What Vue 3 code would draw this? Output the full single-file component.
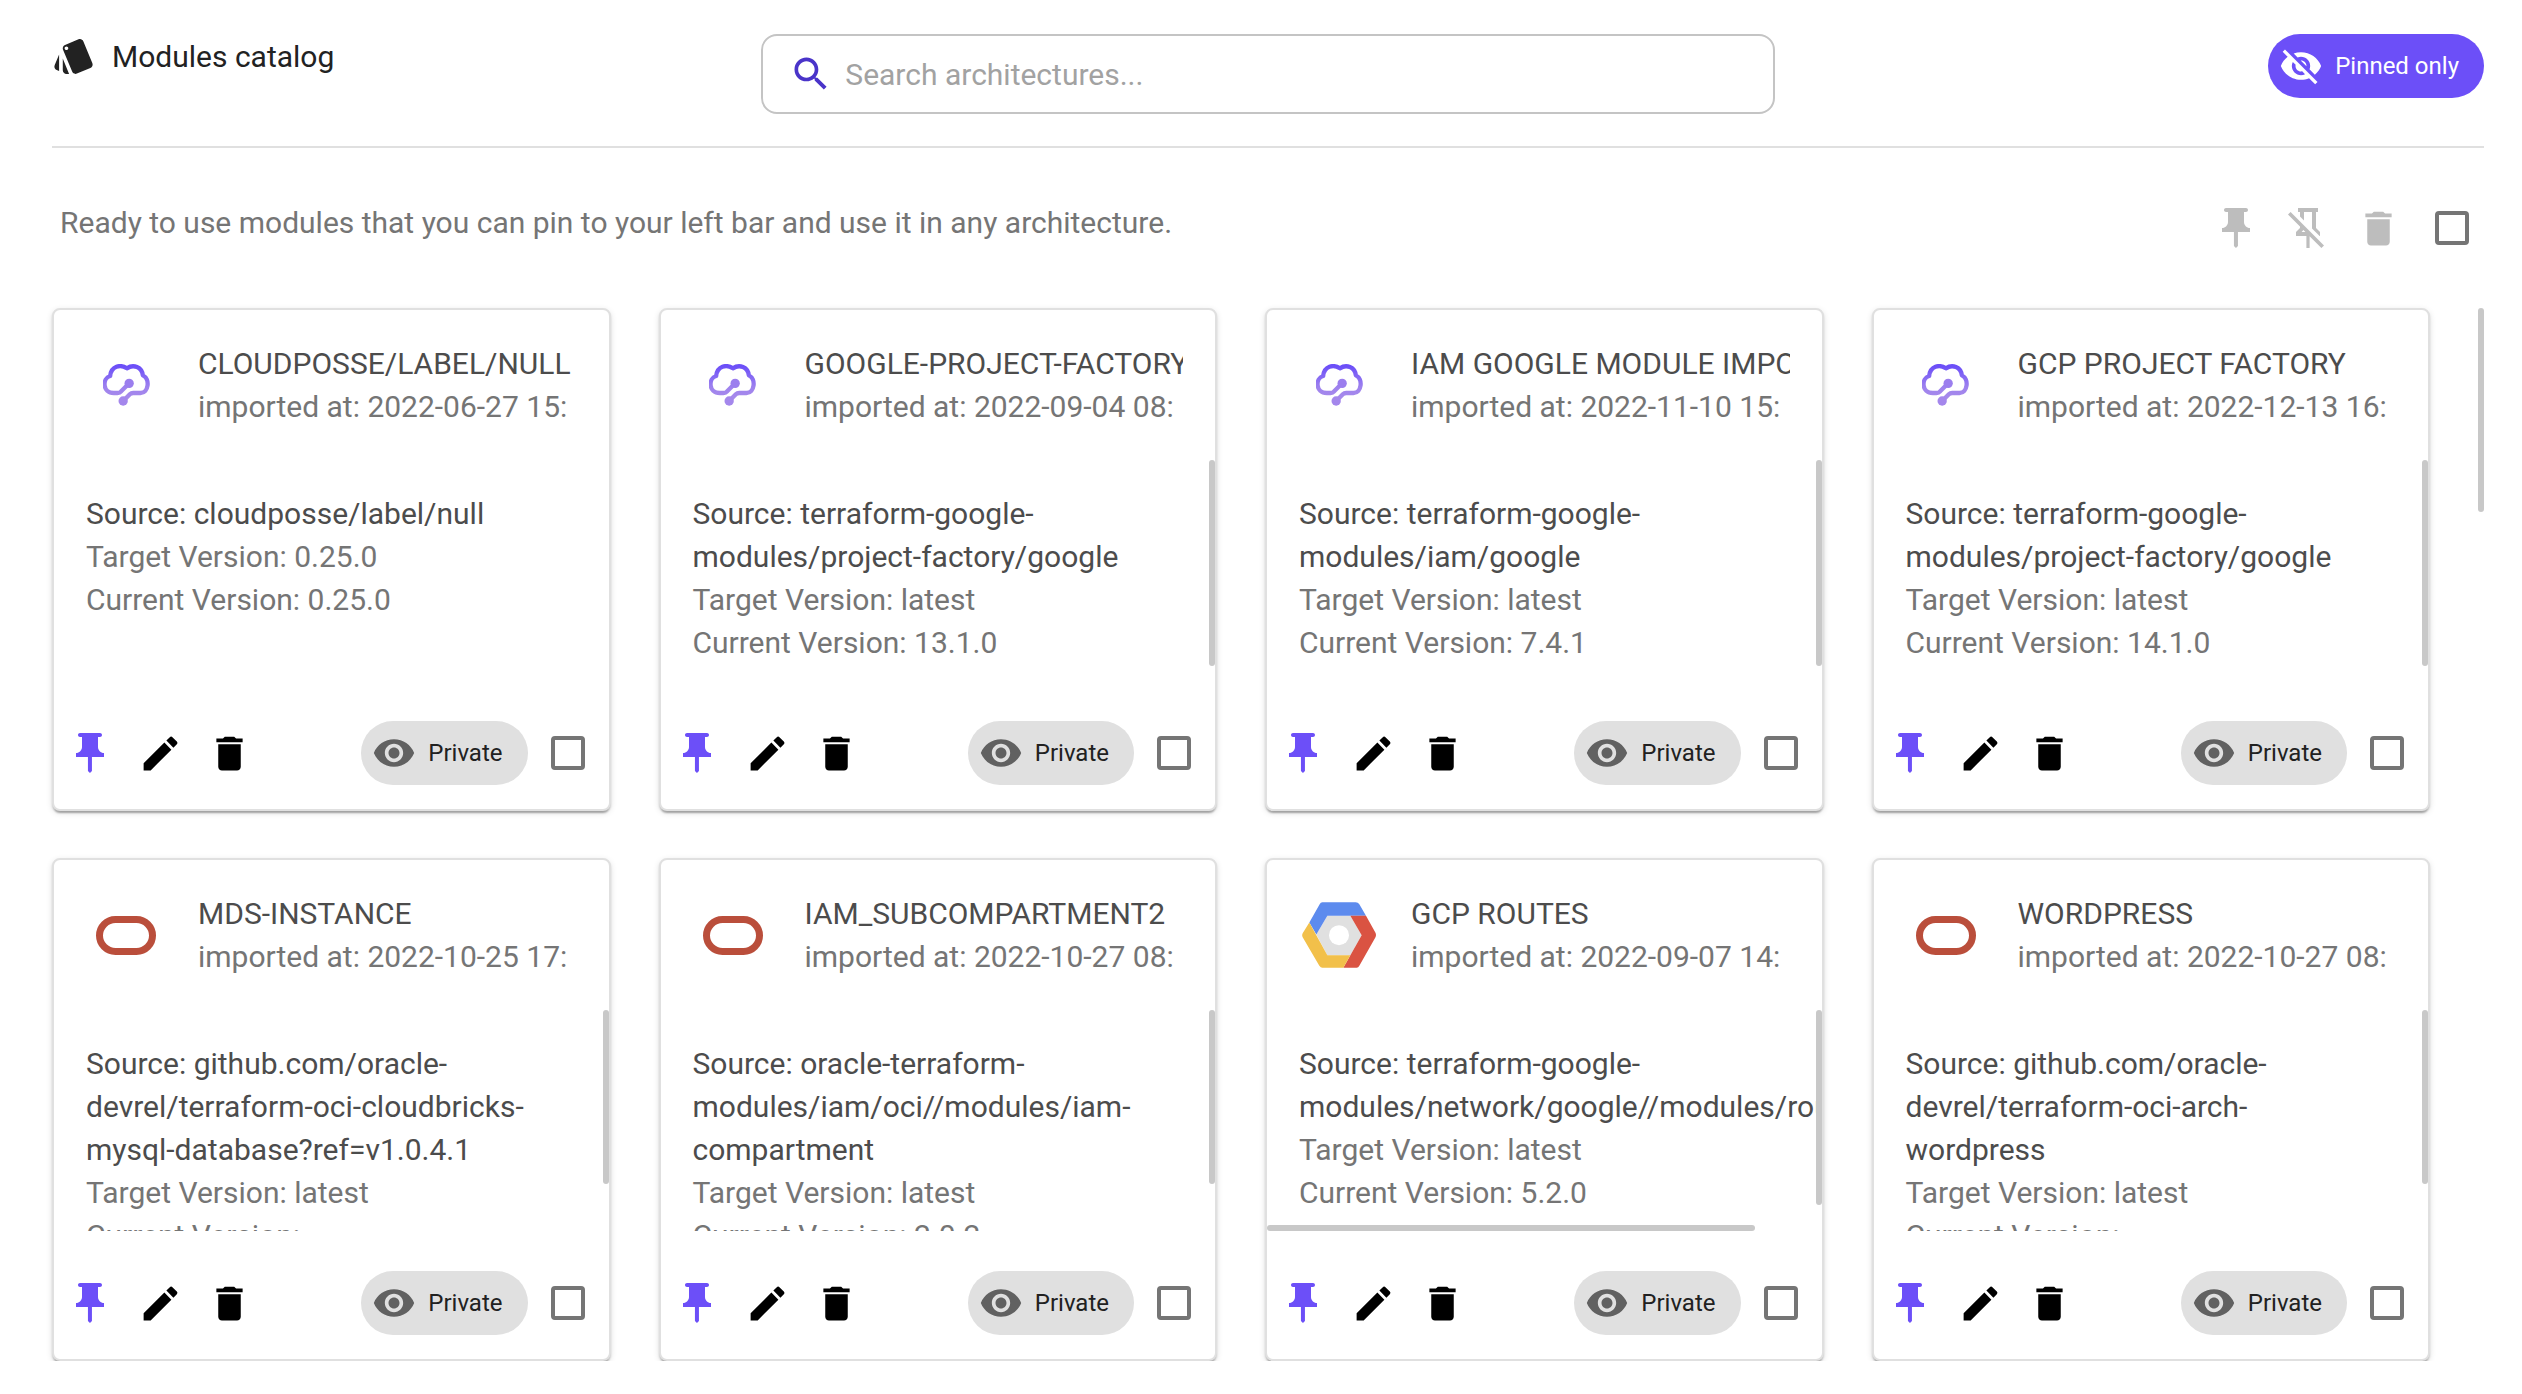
<script setup>
import { h, ref } from 'vue'

const paths = {
  style: 'M2.53 19.65l1.34.56v-9.03l-2.43 5.86c-.41 1.02.08 2.19 1.09 2.61zm19.5-3.7L17.07 3.98c-.31-.75-1.04-1.21-1.81-1.23-.26 0-.53.04-.79.15L7.1 5.95c-.75.31-1.21 1.03-1.23 1.8-.01.27.04.54.15.8l4.96 11.97c.31.76 1.05 1.22 1.83 1.23.26 0 .52-.05.77-.15l7.36-3.05c1.02-.42 1.51-1.59 1.09-2.6zM7.88 8.75c-.55 0-1-.45-1-1s.45-1 1-1 1 .45 1 1-.45 1-1 1zm-2 11c0 1.1.9 2 2 2h1.45l-3.45-8.34v6.34z',
  search: 'M15.5 14h-.79l-.28-.27C15.41 12.59 16 11.11 16 9.5 16 5.91 13.09 3 9.5 3S3 5.91 3 9.5 5.91 16 9.5 16c1.61 0 3.09-.59 4.23-1.57l.27.28v.79l5 4.99L20.49 19l-4.99-5zm-6 0C7.01 14 5 11.99 5 9.5S7.01 5 9.5 5 14 7.01 14 9.5 11.99 14 9.5 14z',
  eye: 'M12 4.5C7 4.5 2.73 7.61 1 12c1.73 4.39 6 7.5 11 7.5s9.27-3.11 11-7.5c-1.73-4.39-6-7.5-11-7.5zM12 17c-2.76 0-5-2.24-5-5s2.24-5 5-5 5 2.24 5 5-2.24 5-5 5zm0-8c-1.66 0-3 1.34-3 3s1.34 3 3 3 3-1.34 3-3-1.34-3-3-3z',
  eyeOff: 'M12 7c2.76 0 5 2.24 5 5 0 .65-.13 1.26-.36 1.83l2.92 2.92c1.51-1.26 2.7-2.89 3.43-4.75-1.73-4.39-6-7.5-11-7.5-1.4 0-2.74.25-3.98.7l2.16 2.16C10.74 7.13 11.35 7 12 7zM2 4.27l2.28 2.28.46.46C3.08 8.3 1.78 10.02 1 12c1.73 4.39 6 7.5 11 7.5 1.55 0 3.03-.3 4.38-.84l.42.42L19.73 22 21 20.73 3.27 3 2 4.27zM7.53 9.8l1.55 1.55c-.05.21-.08.43-.08.65 0 1.66 1.34 3 3 3 .22 0 .44-.03.65-.08l1.55 1.55c-.67.33-1.41.53-2.2.53-2.76 0-5-2.24-5-5 0-.79.2-1.53.53-2.2zm4.31-.78l3.15 3.15.02-.16c0-1.66-1.34-3-3-3l-.17.01z',
  pin: 'M16 9V4h1c.55 0 1-.45 1-1s-.45-1-1-1H7c-.55 0-1 .45-1 1s.45 1 1 1h1v5c0 1.66-1.34 3-3 3v2h5.97v7l1 1 1-1v-7H19v-2c-1.66 0-3-1.34-3-3z',
  pinOff: 'M8,6.2V4H7V2H17V4H16V12L18,14V16H17.8L14,12.2V4H10V8.2L8,6.2M20,20.7L18.7,22L12.8,16.1V22H11.2V16H6V14L8,12V11.3L2,5.3L3.3,4L20,20.7M8.8,14H10.7L9.7,13L8.8,14Z',
  trash: 'M6 19c0 1.1.9 2 2 2h8c1.1 0 2-.9 2-2V7H6v12zM19 4h-3.5l-1-1h-5l-1 1H5v2h14V4z',
  edit: 'M3 17.25V21h3.75L17.81 9.94l-3.75-3.75L3 17.25zM20.71 7.04c.39-.39.39-1.02 0-1.41l-2.34-2.34c-.39-.39-1.02-.39-1.41 0l-1.83 1.83 3.75 3.75 1.83-1.83z',
}

const Icon = (props) =>
  h('svg', { viewBox: '0 0 24 24', fill: 'currentColor', 'aria-hidden': 'true' }, [
    h('path', { d: paths[props.name] }),
  ])
Icon.props = ['name']

const query = ref('')

// barY: vertical thumb height in pixels, barX: horizontal thumb width in percent
const modules = [
  { name: 'CLOUDPOSSE/LABEL/NULL', date: '2022-06-27 15:', source: 'cloudposse/label/null', target: '0.25.0', current: '0.25.0', logo: 'cloud' },
  { name: 'GOOGLE-PROJECT-FACTORY', date: '2022-09-04 08:', source: 'terraform-google-modules/project-factory/google', target: 'latest', current: '13.1.0', logo: 'cloud', barY: 206 },
  { name: 'IAM GOOGLE MODULE IMPORT', date: '2022-11-10 15:', source: 'terraform-google-modules/iam/google', target: 'latest', current: '7.4.1', logo: 'cloud', barY: 206 },
  { name: 'GCP PROJECT FACTORY', date: '2022-12-13 16:', source: 'terraform-google-modules/project-factory/google', target: 'latest', current: '14.1.0', logo: 'cloud', barY: 206 },
  { name: 'MDS-INSTANCE', date: '2022-10-25 17:', source: 'github.com/oracle-devrel/terraform-oci-cloudbricks-mysql-database?ref=v1.0.4.1', target: 'latest', current: '', logo: 'oracle', barY: 174 },
  { name: 'IAM_SUBCOMPARTMENT2', date: '2022-10-27 08:', source: 'oracle-terraform-modules/iam/oci//modules/iam-compartment', target: 'latest', current: '2.0.2', logo: 'oracle', barY: 174 },
  { name: 'GCP ROUTES', date: '2022-09-07 14:', source: 'terraform-google-modules/network/google//modules/routes', target: 'latest', current: '5.2.0', logo: 'google', barY: 195, barX: 88 },
  { name: 'WORDPRESS', date: '2022-10-27 08:', source: 'github.com/oracle-devrel/terraform-oci-arch-wordpress', target: 'latest', current: '', logo: 'oracle', barY: 174 },
]
</script>

<template>
  <div class="page">
    <header class="top">
      <h1 class="title"><Icon name="style" class="icon-sm" />Modules catalog</h1>
      <label class="search">
        <Icon name="search" class="icon-sm search-icon" />
        <input v-model="query" type="text" placeholder="Search architectures..." aria-label="Search architectures" />
      </label>
      <button class="chip chip-primary" type="button"><Icon name="eyeOff" class="icon-sm" />Pinned only</button>
    </header>

    <div class="toolbar">
      <p class="intro">Ready to use modules that you can pin to your left bar and use it in any architecture.</p>
      <div class="bulk">
        <button class="act" type="button" aria-label="Pin selected" disabled><Icon name="pin" class="icon-lg" /></button>
        <button class="act" type="button" aria-label="Unpin selected" disabled><Icon name="pinOff" class="icon-lg" /></button>
        <button class="act" type="button" aria-label="Delete selected" disabled><Icon name="trash" class="icon-md" /></button>
        <input class="check" type="checkbox" aria-label="Select all modules" />
      </div>
    </div>

    <main class="content">
      <div class="cards">
        <article v-for="m in modules" :key="m.name" class="card">
          <div class="card-head">
            <div class="logo">
              <svg v-if="m.logo === 'cloud'" class="logo-cloud" viewBox="128 73 140 126" fill="none" aria-hidden="true">
                <g stroke="url(#cloud-fill)" stroke-width="13" stroke-linejoin="round">
                  <path d="M206 131L182 155Q178 160 171 160H160C125 160 125 116 149 109C152 79 180 73 199 86C219 73 244 82 247 107C270 118 264 160 240 160H218Q212 160 208 164L188 184" />
                </g>
                <circle cx="206" cy="131" r="14" fill="#9b7eee" />
                <circle cx="188" cy="184" r="14" fill="#a487ec" />
              </svg>
              <svg v-else-if="m.logo === 'oracle'" class="logo-oracle" viewBox="0 0 60 39" fill="none" aria-hidden="true">
                <rect x="3.5" y="3.5" width="53" height="32" rx="16" stroke="#ba4e3b" stroke-width="7" />
              </svg>
              <svg v-else class="logo-google" viewBox="96 66 222 197" aria-hidden="true">
                <path fill="#e0e0e0" d="M172 107H241L275 165L241 225H172L139 163Z" />
                <circle cx="207" cy="165" r="30" fill="#fff" />
                <path fill="#5d8bee" d="M157 66H257Q264 66 268 72L288 107H172L139 163L118 127L149 72Q152 66 157 66Z" />
                <path fill="#da5342" d="M241 107H288L316 157Q320 165 316 172L268 257Q265 263 260 263H220L275 165Z" />
                <path fill="#f2c04a" d="M118 127L172 225H241L220 263H157Q152 263 148 257L98 171Q95 165 98 159Z" />
              </svg>
            </div>
            <div class="heading">
              <h2>{{ m.name }}</h2>
              <p>imported at: {{ m.date }}</p>
            </div>
          </div>
          <div class="card-body">
            <div class="scroller">
              <p class="source">Source: {{ m.source }}</p>
              <p>Target Version: {{ m.target }}</p>
              <p>Current Version: {{ m.current }}</p>
            </div>
            <span v-if="m.barY" class="bar bar-y" :style="{ height: m.barY + 'px' }"></span>
            <span v-if="m.barX" class="bar bar-x" :style="{ width: m.barX + '%' }"></span>
          </div>
          <div class="card-foot">
            <button class="act act-pin" type="button" aria-label="Unpin module"><Icon name="pin" class="icon-lg" /></button>
            <button class="act" type="button" aria-label="Edit module"><Icon name="edit" class="icon-md" /></button>
            <button class="act" type="button" aria-label="Delete module"><Icon name="trash" class="icon-md" /></button>
            <button class="chip chip-end" type="button"><Icon name="eye" class="icon-sm" />Private</button>
            <input class="check" type="checkbox" :aria-label="'Select ' + m.name" />
          </div>
        </article>
      </div>
      <div class="thumb"></div>
    </main>

    <svg class="defs" width="0" height="0" aria-hidden="true">
      <defs>
        <linearGradient id="cloud-fill" x1="0" y1="0" x2="0" y2="1">
          <stop offset="0" stop-color="#6c4ff8" />
          <stop offset="0.6" stop-color="#9e82ee" />
          <stop offset="1" stop-color="#a98cea" />
        </linearGradient>
      </defs>
    </svg>
  </div>
</template>

<style>
body {
  background: #fff;
}
</style>

<style scoped>
.page {
  padding: 34px 38px 0 52px;
  font-family: Roboto, sans-serif;
  font-size: 30px;
  line-height: 43px;
  color: #757575;
}
h1,
h2,
p {
  margin: 0;
  font-size: inherit;
  font-weight: 400;
}
button,
input {
  font: inherit;
  margin: 0;
}
svg {
  display: block;
  flex: none;
}
.icon-sm {
  width: 44px;
  height: 44px;
}
.icon-md {
  width: 45px;
  height: 45px;
}
.icon-lg {
  width: 48px;
  height: 48px;
}
.top {
  display: grid;
  grid-template-columns: 7fr 10fr 7fr;
  align-items: start;
  padding-bottom: 32px;
  border-bottom: 2px solid #e0e0e0;
}
.title {
  display: flex;
  align-items: center;
  gap: 16px;
  color: #222;
}
.search {
  display: flex;
  align-items: center;
  gap: 12px;
  box-sizing: border-box;
  height: 80px;
  padding: 0 26px;
  border: 2px solid #c4c4c4;
  border-radius: 16px;
}
.search-icon {
  color: #4a34c9;
}
.search input {
  flex: 1;
  min-width: 0;
  padding: 0;
  border: 0;
  outline: 0;
  background: none;
  color: #222;
}
.search input::placeholder {
  color: #a2a2a2;
  opacity: 1;
}
.chip {
  display: flex;
  align-items: center;
  gap: 12px;
  height: 64px;
  padding: 0 25px 0 11px;
  border: 0;
  border-radius: 32px;
  background: #e0e0e0;
  color: #212121;
  font-size: 24px;
  white-space: nowrap;
}
.chip svg {
  color: #616161;
}
.chip-primary {
  justify-self: end;
  background: #6c4ff8;
  color: #fff;
}
.chip-primary svg {
  color: inherit;
}
.chip-end {
  margin-left: auto;
}
.toolbar {
  display: flex;
  justify-content: space-between;
  align-items: start;
  padding: 44px 0;
}
.intro {
  padding: 9px 8px 0;
}
.bulk {
  display: flex;
  align-items: center;
  padding-right: 15px;
  color: #bdbdbd;
}
.act {
  display: flex;
  padding: 12px;
  border: 0;
  background: none;
  color: #000;
}
.bulk .act {
  color: inherit;
}
.act-pin {
  color: #6c4ff8;
}
.bulk .check {
  margin-left: 22px;
}
.check {
  appearance: none;
  box-sizing: border-box;
  flex: none;
  width: 34px;
  height: 34px;
  border: 4px solid #757575;
  border-radius: 4px;
  background: none;
}
.content {
  display: flex;
  gap: 48px;
}
.cards {
  flex: 1;
  min-width: 0;
  display: grid;
  grid-template-columns: repeat(4, minmax(0, 1fr));
  gap: 47px 48px;
}
.thumb {
  width: 6px;
  height: 204px;
  border-radius: 3px;
  background: #c8c8c8;
}
.card {
  border: 2px solid #e0e0e0;
  border-radius: 8px;
  background: #fff;
  box-shadow: 0 4px 2px -2px rgba(0, 0, 0, 0.2), 0 2px 2px 0 rgba(0, 0, 0, 0.14), 0 2px 6px 0 rgba(0, 0, 0, 0.12);
}
.card-head {
  display: flex;
  align-items: center;
  gap: 32px;
  padding: 32px;
}
.logo {
  display: flex;
  justify-content: center;
  flex: none;
  width: 80px;
}
.logo-cloud {
  width: 47px;
  height: 42px;
}
.logo-oracle {
  width: 60px;
  height: 39px;
}
.logo-google {
  width: 74px;
  height: 66px;
}
.heading {
  flex: 1;
  min-width: 0;
  overflow: hidden;
  white-space: nowrap;
}
h2,
.source {
  color: #4c4c4c;
}
.card-body {
  position: relative;
}
.scroller {
  box-sizing: border-box;
  height: 221px;
  padding: 32px 48px 32px 32px;
  overflow: auto;
  scrollbar-width: none;
}
.bar {
  position: absolute;
  border-radius: 3px;
  background: #c8c8c8;
}
.bar-y {
  top: 0;
  right: 0;
  width: 6px;
}
.bar-x {
  bottom: 0;
  left: 0;
  height: 6px;
}
.card-foot {
  display: flex;
  align-items: center;
  padding: 36px 24px 20px 0;
}
.card-foot .check {
  margin-left: 23px;
}
.defs {
  position: absolute;
}
</style>
